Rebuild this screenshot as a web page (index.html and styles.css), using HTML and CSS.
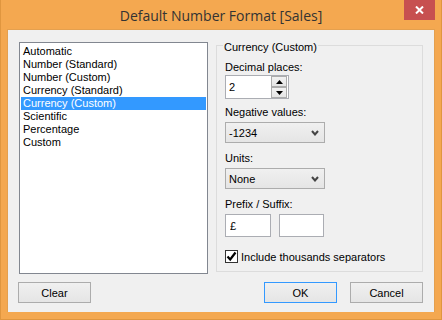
FILE: index.html
```html
<!DOCTYPE html>
<html lang="en">
<head>
    <meta charset="UTF-8">
    <title>Default Number Format [Sales]</title>
    <link rel="stylesheet" href="styles.css">
</head>
<body>
    <div class="window">
        <div class="titlebar">
            <span class="title">Default Number Format [Sales]</span>
            <button class="close" title="Close">
                <svg width="9" height="8" viewBox="0 0 9 8"><path d="M1 0.5 L8 7.5 M8 0.5 L1 7.5" stroke="#fff" stroke-width="2"/></svg>
            </button>
        </div>

        <div class="client">
            <div class="main">
                <ul class="list">
                    <li>Automatic</li>
                    <li>Number (Standard)</li>
                    <li>Number (Custom)</li>
                    <li>Currency (Standard)</li>
                    <li class="selected">Currency (Custom)</li>
                    <li>Scientific</li>
                    <li>Percentage</li>
                    <li>Custom</li>
                </ul>

                <fieldset class="group">
                    <legend>Currency (Custom)</legend>

                    <label class="caption" for="decimals">Decimal places:</label>
                    <div class="spin">
                        <input type="text" id="decimals" value="2">
                        <div class="spin-buttons">
                            <span class="spin-btn"><svg width="7" height="4" viewBox="0 0 7 4"><path d="M3.5 0 L7 4 L0 4 Z" fill="#000"/></svg></span>
                            <span class="spin-btn"><svg width="7" height="4" viewBox="0 0 7 4"><path d="M0 0 L7 0 L3.5 4 Z" fill="#000"/></svg></span>
                        </div>
                    </div>

                    <label class="caption">Negative values:</label>
                    <div class="combo">
                        <span>-1234</span>
                        <svg class="chevron" width="8" height="6" viewBox="0 0 8 6"><path d="M1 1 L4 4.5 L7 1" fill="none" stroke="#444" stroke-width="2"/></svg>
                    </div>

                    <label class="caption">Units:</label>
                    <div class="combo">
                        <span>None</span>
                        <svg class="chevron" width="8" height="6" viewBox="0 0 8 6"><path d="M1 1 L4 4.5 L7 1" fill="none" stroke="#444" stroke-width="2"/></svg>
                    </div>

                    <label class="caption">Prefix / Suffix:</label>
                    <div class="affix-row">
                        <input type="text" class="affix" value="£">
                        <input type="text" class="affix suffix" value="">
                    </div>

                    <label class="check">
                        <span class="checkbox"><svg width="11" height="11" viewBox="0 0 11 11"><path d="M1.5 5.5 L4.2 8.5 L9.5 1.5" fill="none" stroke="#000" stroke-width="2.2"/></svg></span>
                        Include thousands separators
                    </label>
                </fieldset>
            </div>

            <div class="buttons">
                <button class="btn btn-clear">Clear</button>
                <span class="spacer"></span>
                <button class="btn btn-default">OK</button>
                <button class="btn">Cancel</button>
            </div>
        </div>
    </div>
</body>
</html>
```

FILE: styles.css
```css
body {
    margin: 0;
    background: #f4a850;
    font-family: 'Liberation Sans', Arial, sans-serif;
    font-size: 11px;
    color: #000;
}
.window {
    width: 442px;
    height: 320px;
    box-sizing: border-box;
    background: #f4a850;
    border: 1px solid #e0963f;
    border-top: none;
    position: relative;
}
.titlebar {
    height: 29px;
    display: flex;
    align-items: center;
    justify-content: center;
}
.title {
    font-family: 'Open Sans', 'Noto Sans', sans-serif;
    font-size: 14px;
    color: #333;
    margin-top: 1px;
}
.close {
    position: absolute;
    top: 0;
    right: 6px;
    width: 31px;
    height: 20px;
    border: none;
    padding: 0;
    background: #c75050;
    display: flex;
    align-items: center;
    justify-content: center;
}
.client {
    margin: 0 6px;
    height: 283px;
    box-sizing: border-box;
    background: #f0f0f0;
    border: 1px solid #e4a04f;
    border-bottom: none;
    padding: 12px 11px 9px 11px;
}
.main {
    display: flex;
    gap: 8px;
    height: 232px;
}
.list {
    width: 189px;
    margin: 0;
    padding: 2px 1px;
    list-style: none;
    box-sizing: border-box;
    background: #fff;
    border: 1px solid #828790;
}
.list li {
    height: 13px;
    line-height: 13px;
    padding-left: 2px;
    white-space: nowrap;
}
.list li.selected {
    background: #3399ff;
    color: #fff;
}
.group {
    flex: 1;
    margin: -4px 0 2px 0;
    padding: 8px 8px 0 8px;
    border: 1px solid #dcdcdc;
    min-width: 0;
}
.group legend {
    padding: 4px 1px 0 1px;
    margin-left: -2px;
    line-height: 11px;
}
.caption {
    display: block;
    line-height: 13px;
    height: 13px;
}
.spin {
    display: flex;
    width: 64px;
    height: 24px;
    box-sizing: border-box;
    margin-top: 1px;
    border: 1px solid #abadb3;
    background: #fff;
    padding-right: 1px;
}
.spin input {
    flex: 1;
    min-width: 0;
    border: none;
    outline: none;
    padding: 0 0 0 3px;
    font: inherit;
    background: transparent;
}
.spin-buttons {
    display: flex;
    flex-direction: column;
    width: 16px;
}
.spin-btn {
    height: 11px;
    box-sizing: border-box;
    border: 1px solid #acacac;
    background: linear-gradient(#f2f2f2, #e5e5e5);
    display: flex;
    align-items: center;
    justify-content: center;
}
.spin + .caption {
    margin-top: 7px;
}
.combo {
    display: flex;
    align-items: center;
    justify-content: space-between;
    width: 100px;
    height: 21px;
    box-sizing: border-box;
    margin-top: 3px;
    padding: 0 5px 0 3px;
    border: 1px solid #acacac;
    background: linear-gradient(#f0f0f0, #e5e5e5);
}
.combo + .caption {
    margin-top: 9px;
}
.affix-row {
    display: flex;
    gap: 8px;
    margin-top: 3px;
}
.affix {
    width: 46px;
    height: 23px;
    box-sizing: border-box;
    border: 1px solid #abadb3;
    padding: 0 0 0 4px;
    font: inherit;
    outline: none;
}
.affix.suffix {
    width: 45px;
}
.check {
    display: flex;
    align-items: center;
    gap: 3px;
    margin-top: 13px;
    height: 13px;
}
.checkbox {
    width: 13px;
    height: 13px;
    box-sizing: border-box;
    border: 1px solid #333;
    background: #fff;
    display: flex;
    align-items: center;
    justify-content: center;
}
.buttons {
    display: flex;
    gap: 13px;
    margin-top: 8px;
}
.spacer {
    flex: 1;
}
.btn {
    width: 73px;
    height: 21px;
    border: 1px solid #acacac;
    background: linear-gradient(#f0f0f0, #e5e5e5);
    font: inherit;
    color: #000;
    padding: 0;
}
.btn-clear {
    margin-left: -1px;
}
.btn-default {
    border-color: #3399ff;
}
```
